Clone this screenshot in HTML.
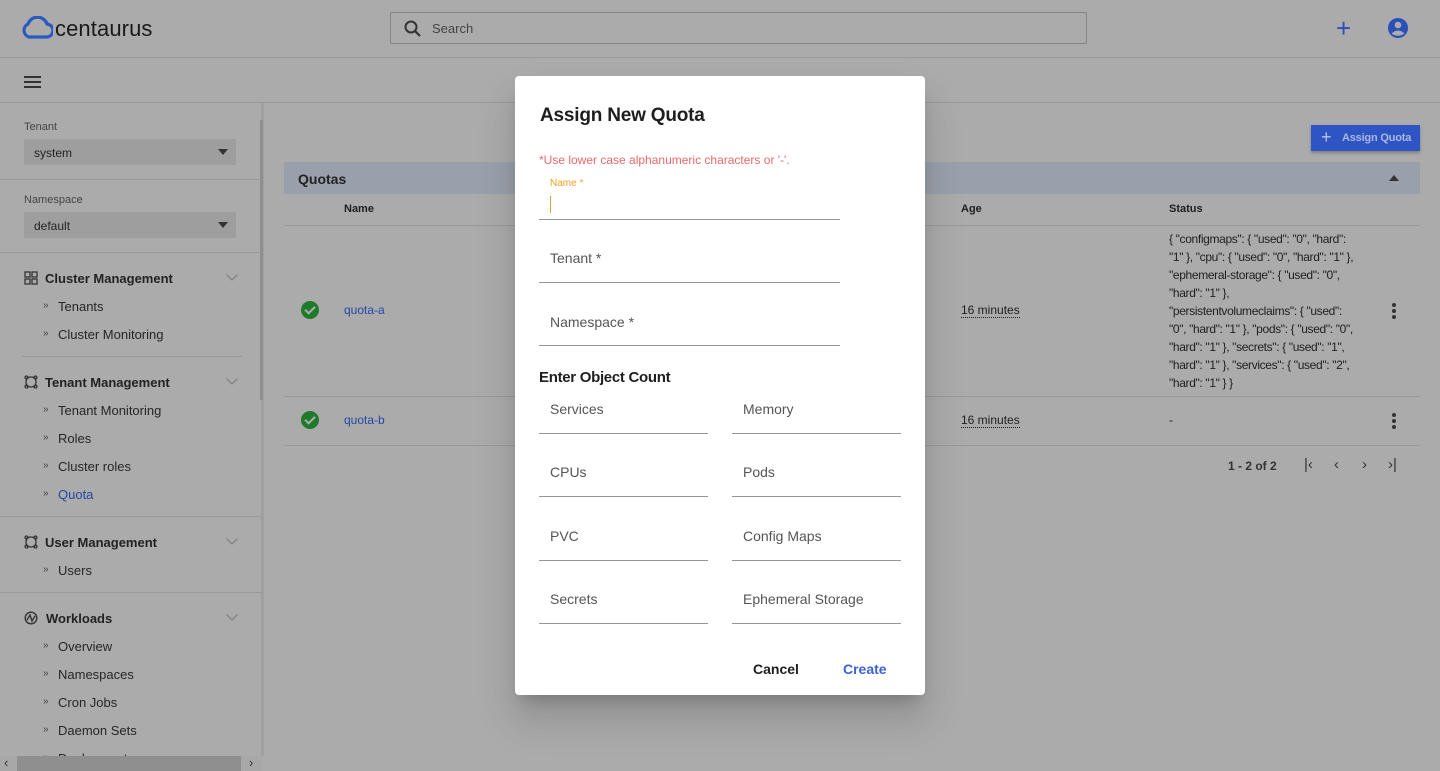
<!DOCTYPE html>
<html><head><meta charset="utf-8"><style>
*{box-sizing:border-box;margin:0;padding:0}
body{width:1440px;height:771px;overflow:hidden;background:#ababab;font-family:"Liberation Sans",Arial,sans-serif;color:#1e1e1e;position:relative}
.a{position:absolute;white-space:nowrap}
.hl{position:absolute;height:1px;background:#999}
.side{font-size:13px;color:#262626}
.sec{font-size:13px;font-weight:bold;color:#222}
.sub::before{content:"»";font-size:10px;color:#444;position:absolute;left:-15px;top:1px}
.sel{position:absolute;left:24px;width:212px;height:26px;background:#9e9e9e;font-size:12px;padding:7px 10px;color:#222}
.sel::after{content:"";position:absolute;right:8px;top:10px;border-left:5px solid transparent;border-right:5px solid transparent;border-top:6px solid #333}
.chev{position:absolute;left:228px;width:8px;height:8px;border-right:1px solid #777;border-bottom:1px solid #777;transform:rotate(45deg)}
.dlg{position:absolute;left:515px;top:76px;width:410px;height:619px;background:#fff;border-radius:4px;box-shadow:0 11px 15px -7px rgba(0,0,0,.2),0 24px 38px 3px rgba(0,0,0,.14)}
.fl{position:absolute;font-size:14px;color:#555}
.ul{position:absolute;height:1px;background:#949494}
.ck{position:absolute;width:18px;height:18px;border-radius:50%;background:#1f7a2c}
.ck::after{content:"";position:absolute;left:6px;top:3px;width:4px;height:8px;border-right:2px solid #adadad;border-bottom:2px solid #adadad;transform:rotate(45deg)}
.keb{position:absolute;width:4px;height:4px;border-radius:50%;background:#333;box-shadow:0 6px 0 #333,0 -6px 0 #333}
.st{font-size:12px;line-height:18px;color:#1e1e1e;letter-spacing:-0.35px}
</style></head><body>
<svg class="a" style="left:21px;top:16px" width="32" height="24" viewBox="0 0 32 24"><path d="M8 21 A7 7 0 0 1 7 8 A10 10 0 0 1 26 8 A6.5 6.5 0 0 1 25 21 Z" fill="none" stroke="#2a59c0" stroke-width="3.2"/></svg>
<div class="a" style="left:55px;top:16px;font-size:22px;color:#1a1a1a;letter-spacing:.1px">centaurus</div>
<div class="a" style="left:390px;top:12px;width:697px;height:32px;border:1px solid #868686;border-radius:2px"></div>
<svg class="a" style="left:404px;top:20px" width="18" height="18" viewBox="0 0 18 18"><circle cx="7" cy="7" r="5.5" fill="none" stroke="#333" stroke-width="2"/><path d="M11 11 L16 16" stroke="#333" stroke-width="2.2"/></svg>
<div class="a" style="left:432px;top:21px;font-size:13px;color:#444">Search</div>
<div class="a" style="left:1336px;top:13px;font-size:26px;color:#2a50b8;font-weight:300">+</div>
<svg class="a" style="left:1387px;top:17px" width="22" height="22" viewBox="0 0 22 22"><circle cx="11" cy="11" r="10" fill="#2a50b8"/><circle cx="11" cy="8" r="3.3" fill="#ababab"/><path d="M4.5 16.5 Q11 10.5 17.5 16.5 Q11 21 4.5 16.5Z" fill="#ababab"/></svg>
<div class="hl" style="left:0;top:57px;width:1440px"></div>
<div class="a" style="left:24px;top:76px;width:17px;height:2px;background:#333;box-shadow:0 5px 0 #333,0 10px 0 #333"></div>
<div class="hl" style="left:0;top:102px;width:1440px"></div>
<div class="a" style="left:261px;top:103px;width:3px;height:653px;background:#a0a0a0"></div>
<div class="a" style="left:260px;top:120px;width:3px;height:280px;background:#8e8e8e"></div>
<div class="a side" style="left:24px;top:121px;font-size:11px;color:#444">Tenant</div>
<div class="sel" style="top:139px">system</div>
<div class="hl" style="left:0;top:179px;width:261px"></div>
<div class="a side" style="left:24px;top:194px;font-size:11px;color:#444">Namespace</div>
<div class="sel" style="top:212px">default</div>
<div class="hl" style="left:0;top:252px;width:261px"></div>
<svg class="a" style="left:24px;top:271px" width="14" height="14" viewBox="0 0 14 14" fill="none" stroke="#333" stroke-width="1.3"><rect x="1" y="1" width="5" height="5"/><rect x="8" y="1" width="5" height="5"/><rect x="1" y="8" width="5" height="5"/><rect x="8" y="8" width="5" height="5"/></svg>
<div class="a sec" style="left:45px;top:271px">Cluster Management</div><div class="chev" style="top:271px"></div>
<div class="a side sub" style="left:58px;top:299px">Tenants</div>
<div class="a side sub" style="left:58px;top:327px">Cluster Monitoring</div>
<div class="hl" style="left:22px;top:356px;width:220px"></div>
<svg class="a" style="left:24px;top:375px" width="14" height="14" viewBox="0 0 14 14" fill="none" stroke="#333" stroke-width="1.3"><path d="M3 3 Q7 1 11 3 Q13 7 11 11 Q7 13 3 11 Q1 7 3 3Z"/><circle cx="2.5" cy="2.5" r="1.5"/><circle cx="11.5" cy="2.5" r="1.5"/><circle cx="2.5" cy="11.5" r="1.5"/><circle cx="11.5" cy="11.5" r="1.5"/></svg>
<div class="a sec" style="left:45px;top:375px">Tenant Management</div><div class="chev" style="top:375px"></div>
<div class="a side sub" style="left:58px;top:403px">Tenant Monitoring</div>
<div class="a side sub" style="left:58px;top:431px">Roles</div>
<div class="a side sub" style="left:58px;top:459px">Cluster roles</div>
<div class="a side sub" style="left:58px;top:487px;color:#2448a8">Quota</div>
<div class="hl" style="left:0;top:516px;width:261px"></div>
<svg class="a" style="left:24px;top:535px" width="14" height="14" viewBox="0 0 14 14" fill="none" stroke="#333" stroke-width="1.3"><path d="M3 3 Q7 1 11 3 Q13 7 11 11 Q7 13 3 11 Q1 7 3 3Z"/><circle cx="2.5" cy="2.5" r="1.5"/><circle cx="11.5" cy="2.5" r="1.5"/><circle cx="2.5" cy="11.5" r="1.5"/><circle cx="11.5" cy="11.5" r="1.5"/></svg>
<div class="a sec" style="left:45px;top:535px">User Management</div><div class="chev" style="top:535px"></div>
<div class="a side sub" style="left:58px;top:563px">Users</div>
<div class="hl" style="left:0;top:592px;width:261px"></div>
<svg class="a" style="left:24px;top:611px" width="14" height="14" viewBox="0 0 14 14" fill="none" stroke="#333" stroke-width="1.4"><circle cx="7" cy="7" r="5.8"/><path d="M3 9 L6 4 L8 10 L11 5"/></svg>
<div class="a sec" style="left:46px;top:611px">Workloads</div><div class="chev" style="top:611px"></div>
<div class="a side sub" style="left:58px;top:639px">Overview</div>
<div class="a side sub" style="left:58px;top:667px">Namespaces</div>
<div class="a side sub" style="left:58px;top:695px">Cron Jobs</div>
<div class="a side sub" style="left:58px;top:723px">Daemon Sets</div>
<div class="a side sub" style="left:58px;top:751px">Deployments</div>
<div class="a" style="left:0;top:756px;width:262px;height:15px;background:#a8a8a8"></div>
<div class="a" style="left:17px;top:756px;width:224px;height:15px;background:#8f8f8f"></div>
<div class="a" style="left:4px;top:755px;font-size:13px;color:#333">‹</div>
<div class="a" style="left:249px;top:755px;font-size:13px;color:#333">›</div>
<div class="a" style="left:1311px;top:125px;width:109px;height:26px;background:#2f55c4;box-shadow:0 2px 3px rgba(0,0,0,.25);color:#a9b8e0;font-size:11px;font-weight:bold;padding:7px 0 0 31px;letter-spacing:-0.2px">Assign Quota</div>
<div class="a" style="left:1321px;top:127px;color:#b8c4e4;font-size:18px">+</div>
<div class="a" style="left:284px;top:162px;width:1136px;height:32px;background:#9aa0ab"></div>
<div class="a" style="left:298px;top:171px;font-size:14px;font-weight:bold;color:#222">Quotas</div>
<div class="a" style="left:1389px;top:175px;border-left:5px solid transparent;border-right:5px solid transparent;border-bottom:6px solid #333"></div>
<div class="a" style="left:344px;top:203px;font-size:11px;font-weight:bold">Name</div>
<div class="a" style="left:961px;top:203px;font-size:11px;font-weight:bold">Age</div>
<div class="a" style="left:1169px;top:203px;font-size:11px;font-weight:bold">Status</div>
<div class="hl" style="left:284px;top:225px;width:1136px"></div>
<div class="ck" style="left:301px;top:301px"></div>
<div class="a" style="left:344px;top:303px;font-size:12px;color:#2448a8">quota-a</div>
<div class="a" style="left:961px;top:303px;font-size:12px;border-bottom:1px dotted #222">16 minutes</div>
<div class="a st" style="left:1169px;top:230px">{ "configmaps": { "used": "0", "hard":<br>"1" }, "cpu": { "used": "0", "hard": "1" },<br>"ephemeral-storage": { "used": "0",<br>"hard": "1" },<br>"persistentvolumeclaims": { "used":<br>"0", "hard": "1" }, "pods": { "used": "0",<br>"hard": "1" }, "secrets": { "used": "1",<br>"hard": "1" }, "services": { "used": "2",<br>"hard": "1" } }</div>
<div class="keb" style="left:1392px;top:309px"></div>
<div class="hl" style="left:284px;top:396px;width:1136px"></div>
<div class="ck" style="left:301px;top:411px"></div>
<div class="a" style="left:344px;top:413px;font-size:12px;color:#2448a8">quota-b</div>
<div class="a" style="left:961px;top:413px;font-size:12px;border-bottom:1px dotted #222">16 minutes</div>
<div class="a" style="left:1169px;top:413px;font-size:12px">-</div>
<div class="keb" style="left:1392px;top:419px"></div>
<div class="hl" style="left:284px;top:445px;width:1136px"></div>
<div class="a" style="left:1228px;top:459px;font-size:12px;font-weight:bold;color:#333">1 - 2 of 2</div>
<div class="a" style="left:1304px;top:456px;font-size:15px;color:#333">|‹</div>
<div class="a" style="left:1334px;top:456px;font-size:15px;color:#333">‹</div>
<div class="a" style="left:1362px;top:456px;font-size:15px;color:#333">›</div>
<div class="a" style="left:1388px;top:456px;font-size:15px;color:#333">›|</div>
<div class="dlg">
<div class="a" style="left:25px;top:29px;font-size:19px;font-weight:bold;color:#1e1e1e;letter-spacing:-0.2px">Assign New Quota</div>
<div class="a" style="left:24px;top:77px;font-size:12px;color:#e86a6a">*Use lower case alphanumeric characters or '-'.</div>
<div class="a" style="left:35px;top:102px;font-size:10px;color:#f0a020">Name *</div>
<div class="a" style="left:35px;top:120px;width:1px;height:17px;background:#f0a020"></div>
<div class="ul" style="left:24px;top:143px;width:301px"></div>
<div class="fl" style="left:35px;top:174px">Tenant *</div>
<div class="ul" style="left:24px;top:206px;width:301px"></div>
<div class="fl" style="left:35px;top:238px">Namespace *</div>
<div class="ul" style="left:24px;top:269px;width:301px"></div>
<div class="a" style="left:24px;top:293px;font-size:15px;font-weight:bold;color:#1e1e1e;letter-spacing:-0.3px">Enter Object Count</div>
<div class="fl" style="left:35px;top:325px">Services</div><div class="fl" style="left:228px;top:325px">Memory</div>
<div class="ul" style="left:24px;top:357px;width:169px"></div><div class="ul" style="left:217px;top:357px;width:169px"></div>
<div class="fl" style="left:35px;top:388px">CPUs</div><div class="fl" style="left:228px;top:388px">Pods</div>
<div class="ul" style="left:24px;top:420px;width:169px"></div><div class="ul" style="left:217px;top:420px;width:169px"></div>
<div class="fl" style="left:35px;top:452px">PVC</div><div class="fl" style="left:228px;top:452px">Config Maps</div>
<div class="ul" style="left:24px;top:484px;width:169px"></div><div class="ul" style="left:217px;top:484px;width:169px"></div>
<div class="fl" style="left:35px;top:515px">Secrets</div><div class="fl" style="left:228px;top:515px">Ephemeral Storage</div>
<div class="ul" style="left:24px;top:547px;width:169px"></div><div class="ul" style="left:217px;top:547px;width:169px"></div>
<div class="a" style="left:238px;top:585px;font-size:14px;font-weight:bold;color:#1e1e1e">Cancel</div>
<div class="a" style="left:328px;top:585px;font-size:14px;font-weight:bold;color:#3a63d8">Create</div>
</div>
</body></html>
